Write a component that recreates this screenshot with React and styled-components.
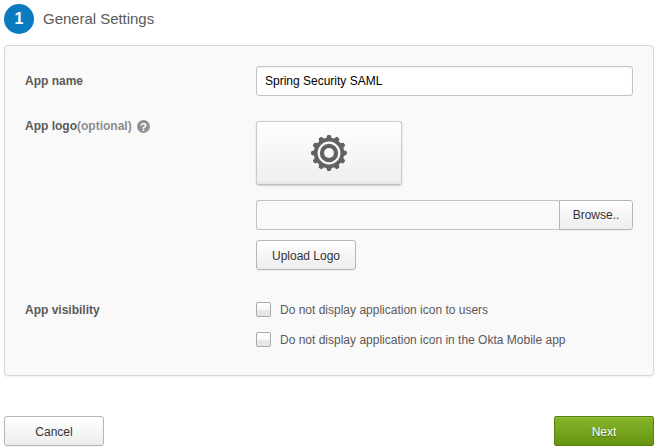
import React from "react";
import styled, { createGlobalStyle, css } from "styled-components";

const GlobalStyle = createGlobalStyle`
  * { box-sizing: border-box; }
  body {
    margin: 0;
    background: #fff;
    color: #5a5a5a;
    font: 12px/16px "Liberation Sans", Arial, Helvetica, sans-serif;
  }
`;

const Page = styled.form`
  width: 658px;
  height: 448px;
  padding: 4px 4px 2px;
`;

const StepHeader = styled.header`
  display: flex;
  align-items: center;
  gap: 9px;
  height: 30px;
`;

const StepNumber = styled.span`
  width: 30px;
  height: 30px;
  border-radius: 50%;
  background: #0b7bc1;
  color: #fff;
  font-size: 16px;
  font-weight: bold;
  line-height: 30px;
  text-align: center;
`;

const StepTitle = styled.h1`
  margin: 0;
  font-size: 15px;
  font-weight: normal;
  line-height: 30px;
  letter-spacing: -0.04px;
`;

const Panel = styled.section`
  display: flex;
  flex-direction: column;
  width: 650px;
  height: 331px;
  margin-top: 11px;
  padding: 20px;
  background: #f9f9f9;
  border: 1px solid #d8d8d8;
  border-radius: 4px;
  box-shadow: 0 1px 2px rgba(0, 0, 0, 0.07);
`;

const Row = styled.div`
  display: grid;
  grid-template-columns: 231px 377px;
  align-items: start;
  margin-bottom: ${(p) => p.$gap || 0}px;
`;

const Label = styled.div`
  display: flex;
  align-items: center;
  height: 16px;
  margin-top: ${(p) => p.$top}px;
  font-weight: bold;
`;

const Optional = styled.span`
  color: #8c8c8c;
`;

const HelpIcon = styled.svg`
  width: 13px;
  height: 13px;
  margin-left: 5px;
`;

const HelpMark = styled.text`
  fill: #fff;
  font: bold 11.5px "Liberation Sans", Arial, sans-serif;
  text-anchor: middle;
`;

const TextInput = styled.input`
  width: 377px;
  height: 30px;
  padding: 0 8px;
  color: #000;
  font: inherit;
  background: #fff;
  border: 1px solid #c3c3c3;
  border-radius: 3px;
  box-shadow: inset 0 1px 2px rgba(0, 0, 0, 0.06);
  outline: none;
`;

const Stack = styled.div`
  display: flex;
  flex-direction: column;
  align-items: flex-start;
`;

const LogoPreview = styled.div`
  display: flex;
  align-items: center;
  justify-content: center;
  width: 146px;
  height: 64px;
  margin-bottom: 15px;
  border: 1px solid #c9c9c9;
  border-bottom-color: #bebebe;
  border-radius: 3px;
  background: linear-gradient(#fff, #eee);
  box-shadow: 0 1px 2px rgba(0, 0, 0, 0.16), inset 0 -2px 0 rgba(0, 0, 0, 0.025);
`;

const raised = css`
  background: linear-gradient(#fff, #ededed);
  color: #333;
  border-color: #b5b5b5;
  box-shadow: 0 1px 0 rgba(0, 0, 0, 0.04);
`;

const primary = css`
  background: linear-gradient(#86b52a, #669412);
  color: #fff;
  border-color: #57800f;
  text-shadow: 0 1px 1px rgba(0, 0, 0, 0.35);
  box-shadow: inset 0 1px 0 rgba(255, 255, 255, 0.12);
`;

const Button = styled.button`
  width: 100px;
  height: 30px;
  padding: 2px 0 0;
  font: inherit;
  border-width: 1px;
  border-style: solid;
  border-radius: ${(p) => (p.$primary ? 2 : 3)}px;
  ${(p) => (p.$primary ? primary : raised)}
`;

const FilePicker = styled.div`
  display: flex;
  width: 377px;
  height: 30px;
  margin-bottom: 10px;
`;

const FilePath = styled.div`
  flex: 1;
  border: 1px solid #c3c3c3;
  border-right: 0;
  border-radius: 3px 0 0 3px;
  background: #f9f9f9;
`;

const BrowseButton = styled(Button)`
  width: 74px;
  padding: 0;
  border-radius: 0 3px 3px 0;
`;

const CheckLabel = styled.label`
  display: flex;
  align-items: center;
  gap: 9px;
  height: 30px;
`;

const Checkbox = styled.input.attrs({ type: "checkbox" })`
  appearance: none;
  width: 15px;
  height: 15px;
  margin: 0 0 1px;
  border: 1px solid #aaa;
  border-radius: 2px;
  background: linear-gradient(#fff 0%, #f8f8f8 50%, #e8e8e8 51%, #e6e6e6 100%);
`;

const Footer = styled.footer`
  display: flex;
  justify-content: space-between;
  margin-top: 40px;
`;

const teeth = Array.from({ length: 12 }, (_, i) => i * 30);

function Gear() {
  return (
    <svg width="36" height="36" viewBox="-18 -18 36 36">
      <g fill="#626262">
        {teeth.map((angle) => (
          <path
            key={angle}
            d="M-3.2-13.5L-2-17Q-1.7-17.9-1-17.9H1Q1.7-17.9 2-17L3.2-13.5Z"
            transform={`rotate(${angle})`}
          />
        ))}
      </g>
      <circle r="15.2" fill="#626262" />
      <circle r="11.4" fill="#fcfcfc" />
      <circle r="9.2" fill="#626262" />
      <circle r="4.9" fill="#fafafa" />
    </svg>
  );
}

export default function App() {
  return (
    <>
      <GlobalStyle />
      <Page>
        <StepHeader>
          <StepNumber>1</StepNumber>
          <StepTitle>General Settings</StepTitle>
        </StepHeader>
        <Panel>
          <Row $gap={25}>
            <Label $top={7}>App name</Label>
            <TextInput defaultValue="Spring Security SAML" aria-label="App name" />
          </Row>
          <Row $gap={25}>
            <Label $top={-3}>
              App logo<Optional>(optional)</Optional>
              <HelpIcon viewBox="0 0 13 13">
                <circle cx="6.5" cy="6.5" r="6.5" fill="#909090" />
                <HelpMark x="6.5" y="10.6">?</HelpMark>
              </HelpIcon>
            </Label>
            <Stack>
              <LogoPreview>
                <Gear />
              </LogoPreview>
              <FilePicker>
                <FilePath />
                <BrowseButton type="button">Browse..</BrowseButton>
              </FilePicker>
              <Button type="button">Upload Logo</Button>
            </Stack>
          </Row>
          <Row>
            <Label $top={7}>App visibility</Label>
            <Stack>
              <CheckLabel>
                <Checkbox />
                Do not display application icon to users
              </CheckLabel>
              <CheckLabel>
                <Checkbox />
                Do not display application icon in the Okta Mobile app
              </CheckLabel>
            </Stack>
          </Row>
        </Panel>
        <Footer>
          <Button type="button">Cancel</Button>
          <Button type="button" $primary>
            Next
          </Button>
        </Footer>
      </Page>
    </>
  );
}
